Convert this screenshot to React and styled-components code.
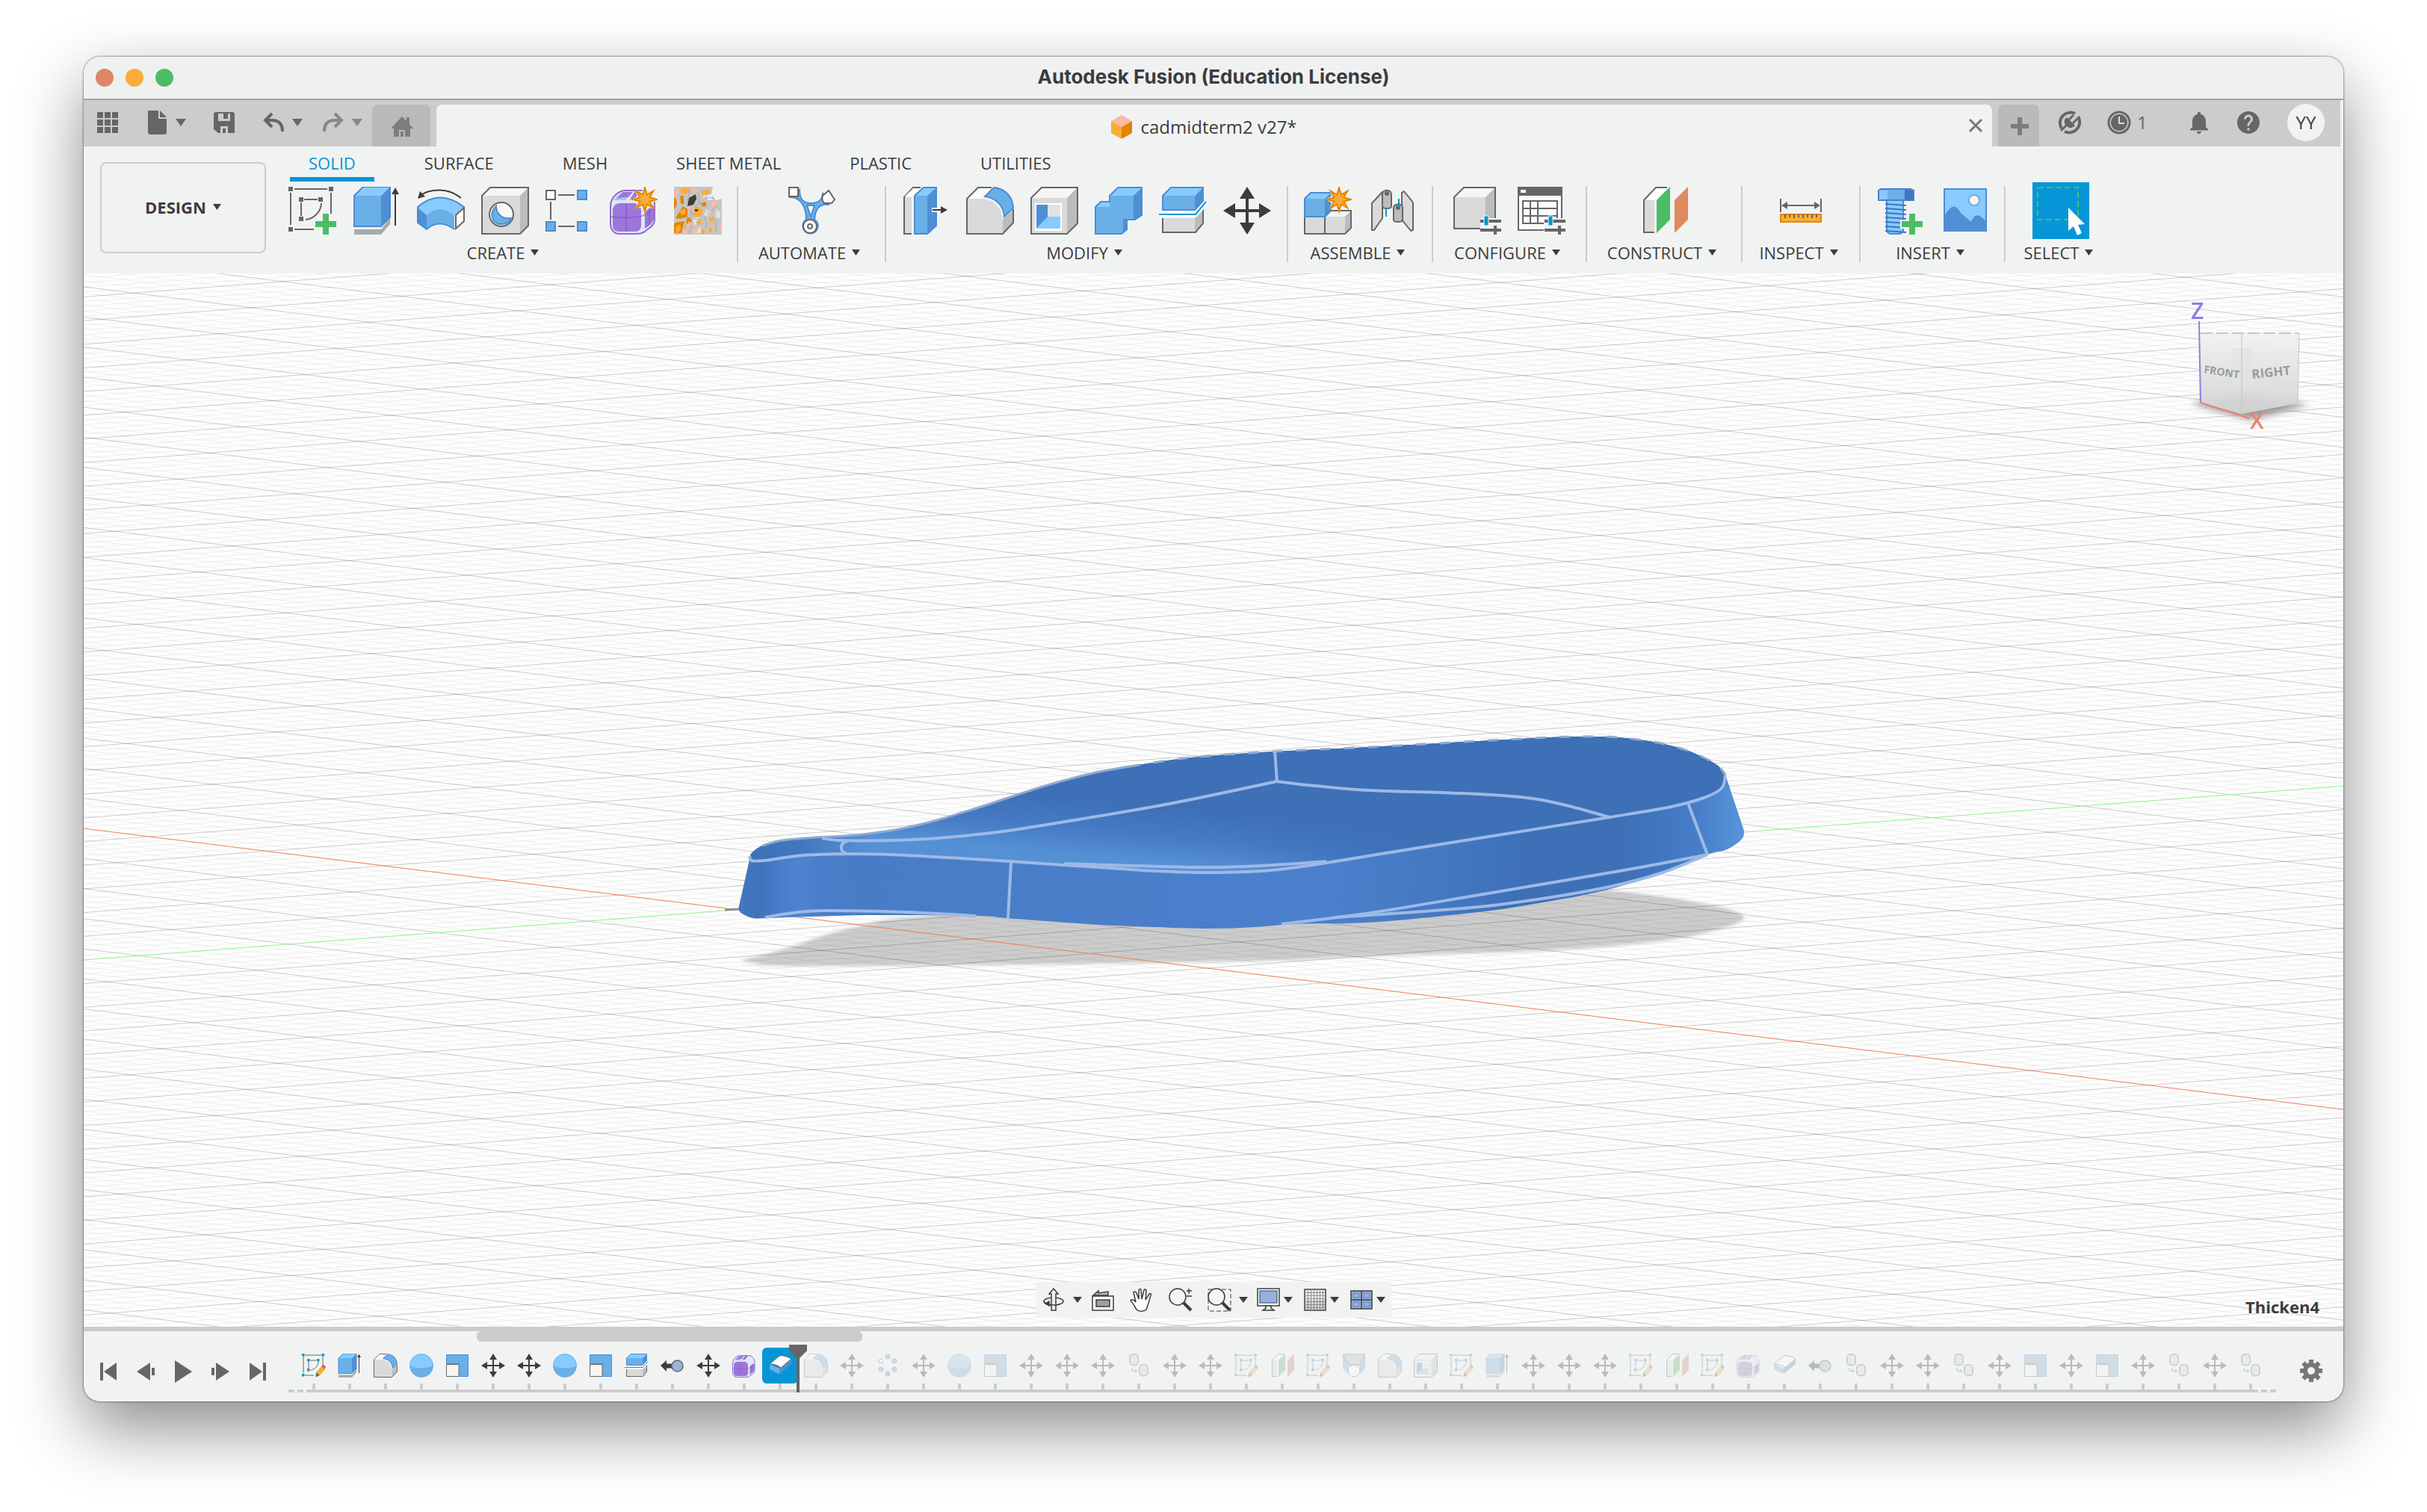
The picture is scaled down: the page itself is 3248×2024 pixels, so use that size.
import styled, { createGlobalStyle, css } from 'styled-components';
import { MdHelp, MdNotifications } from 'react-icons/md';

const GlobalStyle = createGlobalStyle`
  *, *::before, *::after { box-sizing: border-box; }
  body {
    margin: 0;
    background: #fff;
    color: #3c3c3c;
    font-family: 'Open Sans', 'Noto Sans', sans-serif;
    font-size: 22px;
    line-height: 30px;
  }
  button {
    margin: 0;
    padding: 0;
    border: 0;
    background: none;
    color: inherit;
    font: inherit;
  }
  svg { display: block; }
`

const ink = '#3c3c3c';
const line = '#666';
const green = '#4bbd64';
const accent = '#0696d7';

const blue = { front: '#6ab0e6', top: '#87cbff', side: '#4f8fd4', stroke: '#4a8cd6' };
const grey = { front: '#dadada', top: '#f5f5f5', side: '#bcbcbc', stroke: '#666' };

/* ---------- shared drawing helpers ---------- */

// box seen from the front, with a top and a right side
const Box = ({ x, y, w, h, dx = 12, dy = 12, tone = blue }) => (
  <g>
    <path fill={tone.front} d={`M${x} ${y}h${w}v${h}h${-w}z`} />
    <path fill={tone.top} d={`M${x} ${y}l${dx} ${-dy}h${w}l${-dx} ${dy}z`} />
    <path fill={tone.side} d={`M${x + w} ${y}l${dx} ${-dy}v${h}l${-dx} ${dy}z`} />
    <path
      fill="none"
      stroke={tone.stroke}
      strokeWidth="2"
      d={`M${x} ${y}l${dx} ${-dy}h${w}v${h}l${-dx} ${dy}h${-w}z`}
    />
  </g>
);

const Plus = ({ x, y }) => (
  <g>
    <path stroke="#f1f3f3" strokeWidth="12" d={`M${x - 16} ${y}h32M${x} ${y - 16}v32`} />
    <path stroke={green} strokeWidth="8" d={`M${x - 14} ${y}h28M${x} ${y - 14}v28`} />
  </g>
);

const starPoints = (cx, cy, outer, inner) => (
  Array.from({ length: 16 }, (_, i) => {
    const r = i % 2 ? inner : outer;
    const a = (i * Math.PI) / 8;
    return `${cx + r * Math.sin(a)},${cy - r * Math.cos(a)}`;
  }).join(' ')
);

const Star = ({ x, y }) => (
  <g>
    <polygon points={starPoints(x, y, 18, 11)} fill="#f1f3f3" />
    <polygon points={starPoints(x, y, 16, 7)} fill="#f9ad38" stroke="#e28500" strokeWidth="2" />
  </g>
);

const Caret = ({ w = 11, h = 8, color = ink }) => (
  <svg width={w} height={h} viewBox="0 0 12 10" preserveAspectRatio="none" aria-hidden="true">
    <path d="M0 0h12l-6 10z" fill={color} />
  </svg>
);

/* ---------- feature icons, all on a 64 grid ---------- */

const SketchBase = () => (
  <g fill="none" stroke={line} strokeWidth="2">
    <path d="M8 3h44M3 8v43M57 8v28M8 57h26M21 17h18M17 21v18" />
    <path d="M44 22c0 11-10 21-21 22" />
    <path fill={line} stroke="none" d="M0 0h6v6H0zM54 0h6v6h-6zM0 54h6v6H0zM14 14h6v6h-6zM40 14h6v6h-6zM14 40h6v6h-6z" />
  </g>
);

const shapes = {
  sketch: (
    <g>
      <SketchBase />
      <Plus x={50} y={50} />
    </g>
  ),
  sketchEdit: (
    <g>
      <g fill="none" stroke={line} strokeWidth="2">
        <path d="M8 4h44M4 8v44M56 8v26M8 58h24M22 18h16M18 22v18M44 22c0 11-10 21-21 22" />
      </g>
      <path fill={accent} d="M0 0h7v7H0zM53 0h7v7h-7zM0 54h7v7H0zM14 14h7v7h-7zM40 14h7v7h-7zM14 40h7v7h-7z" />
      <path fill="#f9ad38" d="M38 50l14-16 10 8-14 16z" />
      <path fill="#d8663a" d="M52 34l4-4c4-1 9 4 7 8l-3 4z" />
      <path fill="#666" d="M38 50l10 8-11 5z" />
    </g>
  ),
  extrude: (
    <g>
      <path fill="#aaa" d="M2 57h36v7H2zM38 57l12-15v8L38 64z" />
      <Box x={2} y={12} w={36} h={41} />
      <path stroke={ink} strokeWidth="2" d="M57 52V8" />
      <path fill={ink} d="M57 1l5 9H52z" />
    </g>
  ),
  revolve: (
    <g>
      <path fill="none" stroke={ink} strokeWidth="2" d="M4 12C18 2 42 1 59 15" />
      <path fill={ink} d="M1 16L4 6l7 7z" />
      <path fill={blue.top} d="M0 27Q30 2 63 27L50 38Q30 22 13 38z" />
      <path fill={blue.front} d="M13 38Q30 22 50 38V57Q30 42 13 57z" />
      <path fill={blue.side} d="M0 27l13 11v19L0 48z" />
      <path fill="none" stroke={blue.stroke} strokeWidth="2" d="M50 57Q30 42 13 57L1 48V27Q30 2 63 27" />
      <path fill="#fff" stroke={line} strokeWidth="2" d="M52 38l11-10v18L52 56z" />
    </g>
  ),
  hole: (
    <g>
      <Box x={1} y={12} w={51} h={51} dx={11} dy={11} tone={grey} />
      <circle cx="27" cy="37" r="16" fill="#f8f8f8" stroke={line} strokeWidth="2" />
      <path fill={blue.front} stroke={blue.stroke} strokeWidth="2" d="M20 26c-10 9-6 25 8 24 6 0 10-3 12-8-12 2-20-6-20-16z" />
    </g>
  ),
  pattern: (
    <g strokeWidth="2">
      <path stroke={line} d="M17 11h22M7 20v24M17 53h22" />
      <path fill="#fff" stroke={line} d="M1 5h12v12H1z" />
      <path fill={blue.front} stroke={blue.stroke} d="M43 5h12v12H43zM1 47h12v12H1zM43 47h12v12H43z" />
    </g>
  ),
  form: (
    <g>
      <path fill="#dfe6f7" stroke="#9468d0" strokeWidth="2" d="M1 26C1 14 12 5 21 5h22c10 0 17 8 17 19v20c0 8-8 12-12 15-3 3-6 4-12 4H13C5 63 1 57 1 50z" />
      <path fill="#a9c3ef" d="M6 18C11 10 16 7 22 7h8l-9 11zM28 16l6-9h8l-8 9z" />
      <path fill="#9d76db" d="M17 7h14l-6 7c-6 0-12 0-16 3zM34 6h8l-8 10-7 1z" />
      <path fill="#9d76db" d="M14 22h18c6 0 10 4 10 10v20c0 5-3 8-8 8H12c-5 0-8-3-8-8V32c0-6 4-10 10-10zM47 38c0-6 6-10 12-12v18c-2 5-6 8-12 12z" />
      <path fill="none" stroke="#7b55b8" strokeWidth="1" d="M22 22v38M2 40c14 2 28 2 42-1l15-9M53 31v20" />
    </g>
  ),
  formNew: null,
  voronoi: (
    <g>
      <path fill="#c6c5c3" d="M0 0h64v64H0z" />
      <path fill="#f1f1f1" d="M52 0h12v16l-8 2-6-8zM44 12l6-2 2 8-6 0z" />
      <path fill="#e4e2e0" d="M24 42l8-2 2 8-6 4zM40 8l4 4-6 4zM30 56l6-2v8l-6 0zM44 30l6 4-4 6-6-2zM56 30l6 4v8l-6 0z" />
      <path fill="#e28500" d="M0 14c5 2 5 12 0 16zM8 12h5v12l-4-2zM36 22l6-2 2 5-6 2zM2 42l10-16 6 4v10l-10 3zM18 40l6 4-2 8-6-4zM2 48l12-2-4 16H0V50z" />
      <path fill="#f9ad38" d="M8 4l7-4 5 4-2 6-8-1zM36 6l12-3v6l-10 3zM26 30l4-4 8 4v8l-8 3-5-4zM8 32l6-3 2 7-6 2zM30 46l6-3v6l-5 4zM47 42l6-2 1 6-6 2zM2 54l6-4 1 8-6 5zM36 58l5-2v7h-5zM46 56l5-2v6l-5 2zM14 52l4-2-4 10z" />
      <path fill="#fbb9a6" d="M0 8l4-6 3 4-4 8zM24 0l6 4-2 5-4-3zM50 20l6-2 2 6-6 4zM18 26l4 0-1 8-3-2zM44 34l4-2 1 5-4 2zM61 48l3 0v10h-3zM28 54l5 2-3 7-5-1zM50 51l5 0 0 5-4 1zM20 46l3 2-2 6-4-2zM12 58l6-2-2 7h-5z" />
      <path fill={ink} d="M20 15l9-5 1 6-4 8-8 2zM28 30h4v3h-4z" />
      <path fill="none" stroke="#a5a5a5" strokeWidth="1" d="M21 2l-3 20M32 8l2 14 10 6M46 14l8 2M22 30l2 12 8 2M40 40l4 8-2 8M24 52l-4 10M58 24l-8 8M56 44l0 16M34 22l-6 4" />
    </g>
  ),
  automate: (
    <g>
      <path fill={blue.front} stroke={blue.stroke} strokeWidth="2" d="M16 4c0 14 6 18 15 18s16-4 16-14l8 16c-14-2-18 8-19 20 5 3 6 9 3 14-4 6-13 6-17 0-3-5-2-11 3-14 0-16-7-30-21-30z" />
      <path fill="#fff" stroke={blue.stroke} strokeWidth="2" d="M26 25h10l-5 15z" />
      <path fill="#fff" stroke={line} strokeWidth="2" d="M2 1h12v12H2zM47 12l8-7 8 12-4 5H49c-3-3-3-7-2-10z" />
      <circle cx="30" cy="53" r="9" fill="#fff" stroke={line} strokeWidth="2" />
      <circle cx="30" cy="53" r="3" fill="none" stroke={line} strokeWidth="2" />
    </g>
  ),
  pressPull: (
    <g>
      <path fill={grey.front} d="M2 14h11v49H2z" />
      <path fill="none" stroke={line} strokeWidth="2" d="M13 63H3V14L15 1h10" />
      <path fill="#fff" d="M4 13L15 2h9L13 13z" />
      <Box x={17} y={12} w={17} h={51} dx={12} dy={11} />
      <path stroke="#f1f3f3" strokeWidth="6" d="M40 31h14" />
      <path stroke={ink} strokeWidth="2" d="M41 31h12" />
      <path fill={ink} d="M61 31l-9-5v10z" />
    </g>
  ),
  fillet: (
    <g>
      <path fill={grey.front} d="M1 16h20c18 2 28 14 28 30v17H1z" />
      <path fill="#fafafa" d="M1 16L16 1h18L22 16z" />
      <path fill={grey.side} d="M49 44l14-14v18L49 63z" />
      <path fill="none" stroke={line} strokeWidth="2" d="M34 1H16L1 16v47h48l14-15V30" />
      <path fill={blue.front} stroke={blue.stroke} strokeWidth="2" d="M25 13L37 1c16 2 25 12 26 27L51 40C50 25 40 15 25 13z" />
    </g>
  ),
  shell: (
    <g>
      <Box x={1} y={15} w={48} h={48} dx={14} dy={14} tone={grey} />
      <path fill="#fff" d="M6 22h36v37H6z" />
      <path fill="#4f8fd4" d="M8 24h15v17L8 56z" />
      <path fill={blue.top} d="M23 40h17v16H8z" />
      <path fill="#e2e2e2" d="M23 24h17v16H23z" />
    </g>
  ),
  combine: (
    <g>
      <path fill={blue.side} d="M51 12L63 1v37l-9 6H42v14l-7 5V42z" />
      <path fill={blue.front} d="M20 12h32v31H38v20H1V27h19z" />
      <path fill={blue.top} d="M20 12L31 1h32L52 12zM1 27l7-7h12v7z" />
      <path fill="none" stroke={blue.stroke} strokeWidth="2" d="M20 20V12L31 1h32v37l-9 6H43v13l-7 6H1V27l7-7z" />
    </g>
  ),
  split: (
    <g>
      <path fill={grey.front} d="M5 42h43v19H5z" />
      <path fill={grey.side} d="M48 42l11-14v20L48 61z" />
      <path fill="none" stroke={line} strokeWidth="2" d="M5 42v19h44l10-12V28" />
      <Box x={5} y={12} w={43} h={19} dx={11} dy={11} />
      <path fill="none" stroke="#fff" strokeWidth="7" d="M0 37h49l15-17" />
      <path fill="none" stroke={accent} strokeWidth="2" d="M0 37h49l14-17" />
    </g>
  ),
  move: (
    <g>
      <path stroke={ink} strokeWidth="4" d="M32 10v44M10 32h44" />
      <path fill={ink} d="M32 0l10 16H22zM32 64l10-16H22zM0 32l16-10v20zM64 32L48 22v20z" />
    </g>
  ),
  newComponent: (
    <g>
      <Box x={1} y={40} w={27} h={23} dx={8} dy={8} tone={grey} />
      <Box x={28} y={40} w={27} h={23} dx={8} dy={8} tone={grey} />
      <Box x={1} y={16} w={27} h={24} dx={8} dy={8} />
      <Star x={47} y={17} />
    </g>
  ),
  jointPlates: (
    <g stroke={line} strokeWidth="2" strokeLinejoin="round">
      <path fill={grey.front} d="M5 22l14-15v35L8 58H5z" />
      <path fill={grey.side} d="M19 10c0-7 12-7 12 0v16c0 4-12 4-12 0z" />
      <path fill={grey.front} d="M45 8l3-2 12 15v37l-3 1-12-15z" />
      <path fill={grey.side} d="M34 28c0-6 12-6 12 0v16c0 4-12 4-12 0z" />
      <circle cx="25" cy="9" r="2" fill={line} />
      <circle cx="40" cy="28" r="2" fill={line} />
      <path stroke={accent} d="M24 29v11M41 16v11" />
    </g>
  ),
  configure: (
    <g>
      <Box x={1} y={14} w={42} h={42} dx={13} dy={13} tone={grey} />
      <path fill="#f1f3f3" d="M36 42h28v22H36z" />
      <path fill={line} d="M36 44h28v4H36zM36 56h28v4H36zM54 52h4v12h-4z" />
      <path fill={accent} stroke="#f1f3f3" strokeWidth="1" d="M41 39h6v13h-6z" />
    </g>
  ),
  configTable: (
    <g>
      <path fill="#fafafa" stroke={line} strokeWidth="2" d="M1 1h58v57H1z" />
      <path fill={line} d="M0 0h60v12H0z" />
      <path fill="#fff" d="M4 4h7v4H4z" />
      <path fill="none" stroke={line} strokeWidth="2" d="M7 19h46v30H7zM7 29h46M7 39h46M17 19v30M27 19v30" />
      <path fill="#f1f3f3" d="M35 42h30v22H35z" />
      <path fill={line} d="M36 44h28v4H36zM36 56h28v4H36zM54 52h4v12h-4z" />
      <path fill={accent} stroke="#f1f3f3" strokeWidth="1" d="M41 39h6v13h-6z" />
    </g>
  ),
  construct: (
    <g>
      <path fill={grey.front} d="M5 18h14v43H5z" />
      <path fill="#fff" d="M5 18L21 1h15L20 18z" />
      <path fill="none" stroke={line} strokeWidth="2" d="M19 61H5V18L21 1h15" />
      <path fill={green} d="M22 18L40 0v44L22 62z" />
      <path fill="#e08a60" d="M46 18L64 0v44L46 62z" />
    </g>
  ),
  measure: (
    <g>
      <path stroke={line} strokeWidth="2" d="M5 16v18M59 16v18M8 25h48" />
      <path fill={line} d="M6 25l8-5v10zM58 25l-8-5v10z" />
      <path fill="#f9ad38" stroke="#e28500" strokeWidth="2" d="M5 37h54v10H5z" />
      <path stroke={line} strokeWidth="2" d="M11 37v5M17 37v4M23 37v5M29 37v4M35 37v5M41 37v4M47 37v5M53 37v4" />
    </g>
  ),
  fastener: (
    <g>
      <path fill={blue.top} stroke={blue.stroke} strokeWidth="2" d="M14 18h22v42l-4 3H18l-4-3z" />
      <path stroke="#3d73c0" strokeWidth="2" d="M12 23l28 2M12 29l28 2M12 35l28 2M12 41l28 2M12 47l28 2M12 53l28 2M12 59l28 2" />
      <path fill={blue.front} stroke="#4a80c8" strokeWidth="2" d="M3 5l3-2h40l4 2v13H3z" />
      <path fill={blue.top} d="M4 5h11v12H4z" />
      <path fill="#3f76c0" d="M38 4h8l3 2v11H38z" />
      <Plus x={48} y={50} />
    </g>
  ),
  canvas: (
    <g>
      <path fill={blue.top} stroke={blue.stroke} strokeWidth="2" d="M5 3h56v56H5z" />
      <circle cx="45" cy="18" r="7" fill="#fff3ec" stroke={blue.front} strokeWidth="2" />
      <path fill={blue.side} d="M5 39c10-16 15-16 22-4l14 12c4-11 10-12 19-1v13H5z" />
    </g>
  ),
  sphere: (
    <g>
      <circle cx="32" cy="32" r="31" fill={blue.top} stroke={blue.front} strokeWidth="2" />
      <path fill={blue.front} d="M1 32c14 9 48 9 62 0a31 31 0 0 1-62 0z" />
    </g>
  ),
  scale: (
    <g>
      <path fill={blue.front} stroke={blue.stroke} strokeWidth="2" d="M3 3h58v58H38V27H3z" />
      <path fill="#f5f5f5" stroke={line} strokeWidth="2" d="M3 29h33v32H3z" />
    </g>
  ),
  align: (
    <g>
      <path fill={ink} d="M0 32l16-14v9h14v12H16v9z" />
      <circle cx="45" cy="33" r="15" fill="#9ab3dd" stroke={line} strokeWidth="3" />
    </g>
  ),
  thicken: (
    <g>
      <path fill={blue.side} d="M30 36L62 14v14L30 54z" />
      <path fill={blue.front} d="M4 28l26 12v15L4 42z" />
      <path fill="#fff" stroke="#666" strokeWidth="2" d="M4 28L30 6c10-2 22 2 32 8L34 38c-8-8-20-10-30-10z" />
    </g>
  ),
  circular: (
    <g fill={blue.front} stroke={line} strokeWidth="2">
      <circle cx="32" cy="8" r="6" />
      <circle cx="50" cy="20" r="6" />
      <circle cx="50" cy="42" r="6" />
      <circle cx="32" cy="54" r="6" />
      <circle cx="14" cy="42" r="6" />
      <circle cx="14" cy="20" r="6" fill="#fff" />
    </g>
  ),
  joint: (
    <g fill={grey.front} stroke={line} strokeWidth="3">
      <rect x="8" y="2" width="22" height="29" rx="8" />
      <rect x="34" y="30" width="22" height="29" rx="8" />
      <path fill="none" stroke={blue.stroke} d="M14 38v8h12l-4-4m4 4l-4 4" />
    </g>
  ),
  loft: (
    <g>
      <path fill={blue.front} d="M2 2h60v38L48 54V32H16v22L2 40z" />
      <path fill="#b8c0cc" stroke={line} strokeWidth="2" d="M2 2h60L46 30H18z" />
      <circle cx="32" cy="46" r="16" fill="#fff" stroke={line} strokeWidth="2" />
    </g>
  ),
};

shapes.formNew = (
  <g>
    {shapes.form}
    <Star x={47} y={17} />
  </g>
);

const FeatureIcon = ({ name, size = 64 }) => (
  <svg width={size} height={size} viewBox="0 0 64 64" aria-hidden="true">{shapes[name]}</svg>
);

/* ---------- window ---------- */

const Page = styled.div`
  min-height: 100vh;
  padding: 76px 112px 148px;
  display: flex;
`

const AppWindow = styled.div`
  flex: 1;
  min-width: 0;
  display: flex;
  flex-direction: column;
  background: #f1f3f3;
  border-radius: 22px;
  overflow: hidden;
  box-shadow: 0 0 2px 1px rgba(0, 0, 0, .35), 0 36px 90px rgba(0, 0, 0, .46);
`

const TitleBar = styled.header`
  height: 58px;
  flex: none;
  display: grid;
  grid-template-columns: 1fr auto 1fr;
  align-items: center;
  padding: 0 16px;
  background: #eff1f1;
  border-bottom: 2px solid #a3a3a3;

  h1 {
    margin: 0 0 2px;
    font: 700 26px/32px Inter, sans-serif;
  }
`

const Lights = styled.div`
  display: flex;
  gap: 16px;
`

const Light = styled.button`
  width: 24px;
  height: 24px;
  border-radius: 50%;
  background: ${p => p.$color};
`

/* ---------- tab strip ---------- */

const Strip = styled.div`
  height: 62px;
  flex: none;
  margin-right: 4px;
  display: flex;
  align-items: center;
  background: #ccc;
  font-size: 24px;
`

const QuickTools = styled.div`
  display: flex;
  gap: 35px;
  padding: 0 13px 2px 16px;
`

const History = styled.div`
  display: flex;
  gap: 26px;
`

const ToolButton = styled.button`
  display: flex;
  align-items: center;
  gap: 8px;
  height: 32px;
  color: #666;
  opacity: ${p => (p.disabled ? .5 : 1)};
`

const SideTab = styled.button`
  align-self: flex-end;
  flex: none;
  width: ${p => p.$width};
  height: 56px;
  padding: 2px 0 0 2px;
  border-radius: 8px 8px 0 0;
  background: #bababa;
  display: grid;
  place-items: center;
`

const DocTab = styled.div`
  align-self: flex-end;
  flex: 1;
  height: 56px;
  margin: 0 8px;
  padding: 0 12px 0 0;
  border-radius: 8px 8px 0 0;
  background: #f1f3f3;
  display: flex;
  align-items: center;
`

const DocName = styled.div`
  flex: 1;
  display: flex;
  align-items: center;
  justify-content: center;
  gap: 10px;
  padding: 4px 0 0 4px;
`

const Account = styled.div`
  width: 403px;
  padding: 0 21px 2px 25px;
  display: flex;
  justify-content: space-between;
  align-items: center;
`

const Status = styled.div`
  display: flex;
  align-items: center;
  gap: ${p => p.$gap}px;
`

const Avatar = styled.button`
  width: 50px;
  height: 50px;
  margin-left: 4px;
  border-radius: 50%;
  background: #f1f3f3;
  color: #3c3c3c;
`

/* ---------- ribbon ---------- */

const Ribbon = styled.div`
  flex: none;
  height: 170px;
  display: flex;
  padding-left: 22px;
`

const Workspace = styled.button`
  flex: none;
  width: 222px;
  height: 122px;
  margin: 21px 9px 0 0;
  padding-bottom: 2px;
  border: 2px solid #ccc;
  border-radius: 8px;
  display: flex;
  align-items: center;
  justify-content: center;
  gap: 9px;
  font-weight: 700;
`

const Tabs = styled.nav`
  display: flex;
  gap: 42px;
  padding-left: 23px;
`

const Tab = styled.button`
  height: 47px;
  padding: 2px 25px 0;
  border-bottom: 6px solid transparent;
  white-space: nowrap;
  ${p => p.$active && css`
    color: ${accent};
    border-color: ${accent};
  `}
`

const Groups = styled.div`
  display: flex;
  margin-top: 1px;
`

const Group = styled.section`
  flex: 0 0 ${p => p.$width}px;
  position: relative;
  display: flex;
  flex-direction: column;
  align-items: center;

  &:not(:first-child)::before {
    content: '';
    position: absolute;
    left: -1px;
    top: 5px;
    width: 2px;
    height: 102px;
    background: #ccc;
  }
`

const Commands = styled.div`
  height: 76px;
  display: flex;
  align-items: center;
  gap: 22px;
`

const GroupLabel = styled.button`
  height: 36px;
  padding-right: 6px;
  display: flex;
  align-items: center;
  gap: 8px;
  white-space: nowrap;
`

const SelectTool = styled.button`
  width: 76px;
  height: 76px;
  background: ${accent};
`

const groups = [
  { label: 'CREATE', width: 622, tools: ['sketch', 'extrude', 'revolve', 'hole', 'pattern', 'formNew', 'voronoi'] },
  { label: 'AUTOMATE', width: 198, tools: ['automate'] },
  { label: 'MODIFY', width: 538, tools: ['pressPull', 'fillet', 'shell', 'combine', 'split', 'move'] },
  { label: 'ASSEMBLE', width: 194, tools: ['newComponent', 'jointPlates'] },
  { label: 'CONFIGURE', width: 206, tools: ['configure', 'configTable'] },
  { label: 'CONSTRUCT', width: 208, tools: ['construct'] },
  { label: 'INSPECT', width: 158, tools: ['measure'] },
  { label: 'INSERT', width: 194, tools: ['fastener', 'canvas'] },
  { label: 'SELECT', width: 150, tools: [] },
];

/* ---------- viewport ---------- */

const Viewport = styled.main`
  flex: 1;
  position: relative;
  min-height: 600px;
  background: #fefefe;
  overflow: hidden;
`

const Scene = styled.svg`
  position: absolute;
  inset: 0;
  width: 100%;
  height: 100%;
`

const ViewCube = styled.svg`
  position: absolute;
  top: 24px;
  right: 36px;
  font-family: 'Open Sans', sans-serif;
`

const NavBar = styled.div`
  position: absolute;
  left: 50%;
  bottom: 12px;
  transform: translateX(-50%);
  height: 48px;
  padding-left: 8px;
  display: flex;
  align-items: center;
  background: #f1f3f3;
`

const NavButton = styled.button`
  width: ${p => p.$width}px;
  display: flex;
  align-items: center;
  gap: ${p => p.$gap || 4}px;
`

const Hint = styled.div`
  position: absolute;
  right: 32px;
  bottom: 12px;
  font-weight: 700;
`

// ground plane: origin and one major cell along each axis
const origin = [986, 1217.7];
const axisX = [157.4, 19.58];
const axisY = [200, -15.4];
const divisions = 5;

const gridLines = (dir, step) => {
  const major = [];
  const minor = [];
  for (let i = -40 * divisions; i <= 40 * divisions; i++) {
    const x = origin[0] + (step[0] * i) / divisions;
    const y = origin[1] + (step[1] * i) / divisions;
    const d = `M${x - dir[0] * 60} ${y - dir[1] * 60}L${x + dir[0] * 60} ${y + dir[1] * 60}`;
    if (i % divisions) minor.push(d);
    else if (i) major.push(d);
  }
  return { major: major.join(''), minor: minor.join('') };
};

const gridX = gridLines(axisX, axisY);
const gridY = gridLines(axisY, axisX);

const axisPath = dir => (
  `M${origin[0] - dir[0] * 20} ${origin[1] - dir[1] * 20}L${origin[0] + dir[0] * 20} ${origin[1] + dir[1] * 20}`
);

// smooth curve through a list of points
const curve = (pts, start = 'M') => {
  let d = `${start}${pts[0][0]} ${pts[0][1]}`;
  for (let i = 0; i < pts.length - 1; i++) {
    const a = pts[i - 1] || pts[i];
    const b = pts[i];
    const c = pts[i + 1];
    const e = pts[i + 2] || c;
    d += `C${b[0] + (c[0] - a[0]) / 6} ${b[1] + (c[1] - a[1]) / 6} ${c[0] - (e[0] - b[0]) / 6} ${c[1] - (e[1] - b[1]) / 6} ${c[0]} ${c[1]}`;
  }
  return d;
};

const backEdge = [
  [1003, 1151], [1006, 1142], [1020, 1132], [1046, 1125], [1090, 1121], [1143, 1118], [1197, 1111], [1250, 1099],
  [1303, 1083], [1352, 1067], [1405, 1050], [1463, 1035], [1512, 1026], [1570, 1017], [1618, 1012], [1706, 1006],
  [1834, 1000], [1979, 992], [2076, 987], [2124, 986], [2163, 987], [2212, 993], [2250, 1002], [2280, 1014],
  [2299, 1025], [2309, 1037],
];
const lowerEdge = [
  [2334, 1112], [2333, 1120], [2326, 1128], [2309, 1138], [2285, 1144], [2226, 1168], [2173, 1185], [2124, 1197],
  [2076, 1206], [2003, 1218], [1931, 1226], [1858, 1233], [1800, 1236], [1732, 1237], [1679, 1241], [1618, 1243],
  [1546, 1241], [1473, 1238], [1400, 1233], [1347, 1229], [1306, 1226], [1172, 1225], [1085, 1227], [1025, 1229],
  [1008, 1229], [993, 1223], [988, 1217],
];
const rim = [
  [1003, 1146], [1006, 1152], [1022, 1152], [1075, 1145], [1134, 1143], [1192, 1144], [1269, 1148], [1352, 1153],
  [1424, 1158], [1487, 1162], [1546, 1166], [1618, 1168], [1700, 1165], [1775, 1155], [1848, 1143], [1979, 1122],
  [2154, 1094], [2236, 1080], [2280, 1068], [2304, 1055], [2309, 1037],
];
const innerRim = [[1424, 1156], [1521, 1159], [1618, 1161], [1703, 1158], [1775, 1153]];
const crease = [
  [1100, 1122], [1124, 1125], [1192, 1125], [1255, 1122], [1342, 1113], [1449, 1096], [1570, 1075], [1709, 1046],
];
const creaseRight = [
  [1709, 1046], [1761, 1052], [1834, 1058], [1931, 1061], [1998, 1064], [2052, 1069], [2100, 1079], [2154, 1094],
];
const footLeft = [[1024, 1228], [1061, 1222], [1100, 1219], [1182, 1220], [1255, 1223], [1306, 1226]];
const footUpper = [[1715, 1237], [1834, 1222], [1979, 1198], [2173, 1165], [2285, 1144]];
const footLower = [[1785, 1228], [1848, 1224], [1979, 1214], [2076, 1201], [2154, 1187], [2222, 1169], [2285, 1144]];
const shadow = [
  [991, 1286], [1051, 1270], [1110, 1250], [1158, 1238], [1212, 1228], [1400, 1215], [2000, 1180], [2154, 1192],
  [2222, 1200], [2270, 1208], [2316, 1218], [2333, 1231], [2285, 1248], [2212, 1261], [2076, 1272], [1931, 1277],
  [1785, 1282], [1700, 1286], [1376, 1291], [1061, 1293], [1008, 1289], [991, 1286],
];

const bodyPath = `${curve(backEdge)}${curve(lowerEdge, 'L')}Z`;
const topPath = `${curve(backEdge)}${curve([...rim].reverse(), 'L')}Z`;

const Model = () => (
  <Scene viewBox="112 366 3024 1410" preserveAspectRatio="xMidYMid slice" role="img" aria-label="Paddle body on the ground plane">
    <defs>
      <linearGradient id="side" gradientUnits="userSpaceOnUse" x1="988" y1="0" x2="2334" y2="0">
        <stop offset="0" stopColor="#4478c2" />
        <stop offset=".02" stopColor="#3f72bb" />
        <stop offset=".045" stopColor="#4a7ecb" />
        <stop offset=".06" stopColor="#4f84cf" />
        <stop offset=".08" stopColor="#4a7eca" />
        <stop offset=".12" stopColor="#487cc6" />
        <stop offset=".35" stopColor="#4a7ec9" />
        <stop offset=".58" stopColor="#4c80cc" />
        <stop offset=".7" stopColor="#4478c2" />
        <stop offset=".78" stopColor="#3d70b7" />
        <stop offset=".88" stopColor="#3d70b7" />
        <stop offset=".95" stopColor="#477cc7" />
        <stop offset="1" stopColor="#5795d8" />
      </linearGradient>
      <linearGradient id="top" gradientUnits="userSpaceOnUse" x1="1408" y1="1068" x2="1400" y2="1154">
        <stop offset="0" stopColor="#3d70b7" />
        <stop offset=".45" stopColor="#477bc5" />
        <stop offset=".85" stopColor="#5590d5" />
      </linearGradient>
      <linearGradient id="topShade" gradientUnits="userSpaceOnUse" x1="1003" y1="0" x2="2310" y2="0">
        <stop offset="0" stopColor="#3d70b7" />
        <stop offset=".05" stopColor="#3d70b7" stopOpacity=".8" />
        <stop offset=".12" stopColor="#3d70b7" stopOpacity="0" />
        <stop offset=".5" stopColor="#3d70b7" stopOpacity="0" />
        <stop offset=".7" stopColor="#3d70b7" />
        <stop offset="1" stopColor="#3d70b7" />
      </linearGradient>
      <filter id="soft" x="-5%" y="-20%" width="110%" height="140%">
        <feGaussianBlur stdDeviation="2" />
      </filter>
    </defs>

    <path d={curve(shadow)} fill="#ccc" filter="url(#soft)" />
    <g fill="none" stroke="#000">
      <path d={gridX.minor + gridY.minor} strokeOpacity=".06" />
      <path d={gridX.major + gridY.major} strokeOpacity=".2" />
    </g>
    <path d={axisPath(axisX)} stroke="#ee7a5a" strokeWidth="1" />
    <path d={axisPath(axisY)} stroke="#8df08d" strokeWidth="1" />
    <path d="M970 1218l18-1" stroke="#8a8f8a" strokeWidth="3" />

    <path d={bodyPath} fill="url(#side)" />
    <path d={topPath} fill="url(#top)" />
    <path d={topPath} fill="url(#topShade)" />
    <g fill="none" stroke="#9db9e6" strokeWidth="4">
      <path d={curve(backEdge.slice(2, 13))} strokeWidth="3" stroke="#8fa9d0" />
      <path d={curve(backEdge.slice(12))} strokeWidth="3" stroke="#8fa9d0" strokeDasharray="14 18" />
      <path d={curve(rim)} />
      <path d={curve(innerRim)} />
      <path d={curve(crease)} />
      <path d={curve(creaseRight)} />
      <path d={curve(footLeft)} />
      <path d={curve(footUpper)} />
      <path d={curve(footLower)} />
      <path d="M1706 1005l3 41M1134 1126c-11 3-11 14 0 17M1353 1154l-4 75M2259 1075l26 69" />
    </g>
  </Scene>
);

const Cube = () => (
  <ViewCube width="180" height="200" viewBox="2920 390 180 200" role="img" aria-label="View cube">
    <defs>
      <linearGradient id="face" x1="0" y1="0" x2="0" y2="1">
        <stop offset="0" stopColor="#f0f1f1" />
        <stop offset="1" stopColor="#d2d3d3" />
      </linearGradient>
      <filter id="cubeShadow" x="-20%" y="-60%" width="140%" height="220%">
        <feGaussianBlur stdDeviation="5" />
      </filter>
    </defs>
    <path d="M2932 540l68-14 90 16-78 20z" fill="#999" filter="url(#cubeShadow)" />
    <path d="M2945 446l55-1v109l-55-15z" fill="url(#face)" fillOpacity=".94" />
    <path d="M3000 445l77 1-2 94-75 14z" fill="url(#face)" fillOpacity=".94" />
    <path d="M2988 466h27v52l-15 4-12-2z" fill="#dfe2e5" fillOpacity=".6" />
    <path d="M3000 445v109M3077 446l-2 94" stroke="#c4c4c4" fill="none" />
    <path d="M2945 446h132" stroke="#c8c8c8" strokeWidth="2" strokeDasharray="16 5" />
    <path d="M2943 430l2 109" stroke="#8f7fdc" strokeWidth="2" />
    <path d="M2945 539l65 21" stroke="#ea8468" strokeWidth="2" />
    <g fill="#9b9b9b" fontWeight="700">
      <text x="2949" y="499" fontSize="14" transform="rotate(9 2949 499)">FRONT</text>
      <text x="3014" y="507" fontSize="17" transform="rotate(-6 3014 507)">RIGHT</text>
    </g>
    <g fontSize="30" fontWeight="600">
      <text x="2932" y="427" fill="#8f7fdc">Z</text>
      <text x="3011" y="574" fill="#ea8468">X</text>
    </g>
  </ViewCube>
);

const navShapes = {
  orbit: (
    <g>
      <ellipse cx="16" cy="18" rx="13" ry="5" />
      <path fill="#eee" d="M13 30V8h-3l6-7 6 7h-3v22z" />
      <path d="M3 17c0 4 6 6 16 6" />
      <path fill={ink} d="M5 21l5-3v6z" />
    </g>
  ),
  lookAt: (
    <g>
      <path fill="#fff" d="M2 11h28v19H2z" />
      <path fill="#9a9fa8" d="M7 16h18v9H7z" />
      <path fill="#bbb" d="M3 10l7-6v3l13-2v5z" />
    </g>
  ),
  pan: (
    <path fill="#fff" d="M9 29C6 24 4 20 1 17c1-2 4-2 7 2L5 6c1-2 3-1 4 1l3 8 0-12c1-2 3-2 3 0l1 12 3-12c1-2 3-1 3 1l-1 12 5-8c2-1 3 0 2 2-2 6-3 12-6 19-3 3-10 3-13 0z" />
  ),
  zoom: (
    <g>
      <path strokeWidth="4" d="M20 20l10 10" />
      <circle cx="12" cy="12" r="11" fill="#f6f6f6" />
      <path d="M24 4h7M27 1v7M24 11h7" />
    </g>
  ),
  fit: (
    <g>
      <path strokeDasharray="6 3" strokeWidth="1" d="M1 2h30v29H1z" />
      <path strokeWidth="4" d="M20 20l10 10" />
      <circle cx="12" cy="12" r="11" fill="#f6f6f6" />
    </g>
  ),
  display: (
    <g>
      <path fill="#fff" d="M1 1h29v23H1z" />
      <path fill="#97b0dc" stroke="#5b6f96" d="M4 4h23v16H4z" />
      <path fill="#eee" d="M12 24h7v3l4 3H8l4-3z" />
    </g>
  ),
  grid: (
    <g>
      <path fill="#fff" d="M2 2h28v28H2z" />
      <path stroke="none" fill="#888" fillOpacity=".35" d="M3 16h26v13H3z" />
      <path stroke="#888" strokeWidth="1" d="M6.5 2v28M10.5 2v28M14.5 2v28M18.5 2v28M22.5 2v28M26.5 2v28M2 6.5h28M2 10.5h28M2 14.5h28M2 18.5h28M2 22.5h28M2 26.5h28" />
    </g>
  ),
  viewports: (
    <g>
      <path fill="#97b0dc" d="M2 4h28v24H2zM16 4v24M2 16h28" />
      <path stroke="#5f80bd" strokeWidth="1" d="M5 7h8v6H5zM19 7h8v6h-8zM5 19h8v6H5zM19 19h8v6h-8z" />
    </g>
  ),
};

const navItems = [
  { name: 'orbit', label: 'Orbit', width: 66, gap: 10, menu: true },
  { name: 'lookAt', label: 'Look at', width: 52 },
  { name: 'pan', label: 'Pan', width: 52 },
  { name: 'zoom', label: 'Zoom', width: 52 },
  { name: 'fit', label: 'Fit', width: 66, gap: 10, menu: true },
  { name: 'display', label: 'Display settings', width: 62, menu: true },
  { name: 'grid', label: 'Grid and snaps', width: 62, menu: true },
  { name: 'viewports', label: 'Viewports', width: 56, menu: true },
];

/* ---------- timeline ---------- */

const Footer = styled.footer`
  flex: none;
  display: flex;
  border-top: 6px solid #cbcbcb;
`

const Playback = styled.div`
  flex: none;
  width: 270px;
  padding: 14px 0 0 17px;
  display: flex;
  align-items: center;
  gap: 18px;
`

const Timeline = styled.div`
  flex: 1;
  min-width: 0;
  padding: 0 4px 12px;
`

const ScrollArea = styled.div`
  display: grid;
  grid-template-columns: 252fr 516fr 1892fr;
  margin-bottom: 8px;

  &::before {
    content: '';
    grid-column: 2;
    height: 14px;
    border-radius: 6px;
    background: #ccc;
  }
`

const Features = styled.ol`
  margin: 0;
  padding: 0 0 0 10px;
  list-style: none;
  display: flex;
`

const Feature = styled.li`
  flex: 0 0 48px;
  position: relative;
  display: flex;
  flex-direction: column;
  align-items: center;

  button {
    width: 48px;
    height: 48px;
    border-radius: 6px;
    display: grid;
    place-items: center;
    background: ${p => (p.$selected ? accent : 'none')};
  }
  ${p => p.$faded && css`
    button svg {
      opacity: .3;
      filter: saturate(.6);
    }
  `}

  &::after {
    content: '';
    width: 4px;
    height: 8px;
    background: #ccc;
  }
`

const Marker = styled.svg`
  position: absolute;
  z-index: 1;
  top: -4px;
  right: -12px;
`

const Track = styled.div`
  height: 4px;
  display: flex;
  gap: 4px;

  span { width: 8px; background: #ccc; }
  span:nth-child(3) { flex: 1; }
`

const Settings = styled.button`
  flex: none;
  width: 86px;
  padding-top: 12px;
  display: grid;
  place-items: center;
`

const features = [
  'sketchEdit', 'extrude', 'fillet', 'sphere', 'scale', 'move', 'move', 'sphere', 'scale', 'split', 'align',
  'move', 'form', 'thicken', 'fillet', 'move', 'circular', 'move', 'sphere', 'scale', 'move', 'move', 'move',
  'joint', 'move', 'move', 'sketchEdit', 'construct', 'sketchEdit', 'loft', 'fillet', 'shell', 'sketchEdit',
  'extrude', 'move', 'move', 'move', 'sketchEdit', 'construct', 'sketchEdit', 'form', 'thicken', 'align', 'joint',
  'move', 'move', 'joint', 'move', 'scale', 'move', 'scale', 'move', 'joint', 'move', 'joint',
];
const current = 13;

const playback = [
  { label: 'Go to start', d: 'M5 4h4v24H5zM27 4v24L10 16z' },
  { label: 'Step back', d: 'M22 4v24L4 16zM24 11h4v10h-4z' },
  { label: 'Play', d: 'M5 1l23 15L5 31z' },
  { label: 'Step forward', d: 'M10 4v24l18-12zM4 11h4v10H4z' },
  { label: 'Go to end', d: 'M23 4h4v24h-4zM5 4v24l17-12z' },
];

const Gear = () => (
  <svg width="32" height="32" viewBox="0 0 32 32" aria-hidden="true">
    <circle cx="16" cy="16" r="8" fill="none" stroke="#777" strokeWidth="6" />
    {[0, 45, 90, 135, 180, 225, 270, 315].map(a => (
      <rect key={a} x="13" y="1" width="6" height="6" fill="#777" transform={`rotate(${a} 16 16)`} />
    ))}
  </svg>
);

function App() {
  return (
    <Page>
      <GlobalStyle />
      <AppWindow>
        <TitleBar>
          <Lights>
            <Light $color="#de8669" aria-label="Close" />
            <Light $color="#f9ad38" aria-label="Minimize" />
            <Light $color="#4bbd64" aria-label="Zoom window" />
          </Lights>
          <h1>Autodesk Fusion (Education License)</h1>
        </TitleBar>

        <Strip>
          <QuickTools>
            <ToolButton aria-label="Data panel">
              <svg width="32" height="32" viewBox="0 0 32 32">
                <path fill="#666" d="M2 2h8v8H2zM12 2h8v8h-8zM22 2h8v8h-8zM2 12h8v8H2zM12 12h8v8h-8zM22 12h8v8h-8zM2 22h8v8H2zM12 22h8v8h-8zM22 22h8v8h-8z" />
              </svg>
            </ToolButton>
            <ToolButton aria-label="File">
              <svg width="32" height="32" viewBox="0 0 32 32">
                <path fill="#666" d="M3 0h14v11h11v19l-2 2H5l-2-2zM19 0l9 9h-9z" />
              </svg>
              <Caret w={14} h={10} color="#666" />
            </ToolButton>
            <ToolButton aria-label="Save">
              <svg width="32" height="32" viewBox="0 0 32 32">
                <path fill="#666" fillRule="evenodd" d="M4 2h24l2 2v26H8l-6-5V4zM8 4v10h16V4h-3v7h-6V4zM11 21v9h10v-9zM14 24h4v6h-4z" />
              </svg>
            </ToolButton>
            <History>
              <ToolButton aria-label="Undo">
                <svg width="32" height="32" viewBox="0 0 32 32" fill="none" stroke="#666" strokeWidth="4">
                  <path d="M13 4l-9 9 9 9M5 13h8c9 0 14 5 14 15" />
                </svg>
                <Caret w={14} h={10} color="#666" />
              </ToolButton>
              <ToolButton aria-label="Redo" disabled>
                <svg width="32" height="32" viewBox="0 0 32 32" fill="none" stroke="#444" strokeWidth="4">
                  <path d="M17 4l9 9-9 9M25 13h-8C8 13 3 18 3 28" />
                </svg>
                <Caret w={14} h={10} color="#444" />
              </ToolButton>
            </History>
          </QuickTools>
          <SideTab $width="78px" aria-label="Home">
            <svg width="32" height="32" viewBox="0 0 32 32">
              <path fill="#7d7d7d" d="M16 3l6 6V4h4v9l5 6h-4v11h-7v-9h-8v9H5V19H1zM14 23h4v7h-4z" />
            </svg>
          </SideTab>
          <DocTab>
            <DocName>
              <svg width="30" height="32" viewBox="0 0 30 32" aria-hidden="true">
                <path fill="#fbb9a6" d="M15 0l14 8-14 8L1 8z" />
                <path fill="#f9ad38" d="M1 8l14 8v16L1 24z" />
                <path fill="#e28500" d="M29 8l-14 8v16l14-8z" />
              </svg>
              cadmidterm2 v27*
            </DocName>
            <button aria-label="Close document">
              <svg width="20" height="20" viewBox="0 0 20 20" stroke="#777" strokeWidth="3">
                <path d="M2 2l16 16M18 2L2 18" />
              </svg>
            </button>
          </DocTab>
          <SideTab $width="55px" aria-label="New design">
            <svg width="26" height="26" viewBox="0 0 26 26">
              <path stroke="#7d7d7d" strokeWidth="6" d="M13 1v24M1 13h24" />
            </svg>
          </SideTab>
          <Account>
            <Status $gap={34}>
              <ToolButton aria-label="Extensions">
                <svg width="32" height="32" viewBox="0 0 32 32" fill="none" stroke="#666">
                  <path strokeWidth="4" d="M23 4A14 14 0 0 0 5 24M27 8A14 14 0 0 1 9 28" />
                  <path fill="#666" stroke="none" d="M12 9l11 11c-4 4-8 4-11 1l-7 7-2-2 7-7c-2-3-2-7 2-10z" />
                  <path strokeWidth="3" d="M15 12l6-6M20 17l6-6" />
                </svg>
              </ToolButton>
              <ToolButton>
                <svg width="32" height="32" viewBox="0 0 32 32" aria-hidden="true">
                  <circle cx="16" cy="16" r="14" fill="none" stroke="#666" strokeWidth="3" />
                  <circle cx="16" cy="16" r="11" fill="#666" />
                  <path fill="none" stroke="#ddd" strokeWidth="2" d="M16 8v9h7" />
                </svg>
                1
              </ToolButton>
            </Status>
            <Status $gap={30}>
              <ToolButton aria-label="Notifications"><MdNotifications size={36} /></ToolButton>
              <ToolButton aria-label="Help"><MdHelp size={36} /></ToolButton>
              <Avatar>YY</Avatar>
            </Status>
          </Account>
        </Strip>

        <Ribbon>
          <Workspace>DESIGN <Caret /></Workspace>
          <div>
            <Tabs>
              {['SOLID', 'SURFACE', 'MESH', 'SHEET METAL', 'PLASTIC', 'UTILITIES'].map(name => (
                <Tab key={name} $active={name === 'SOLID'}>{name}</Tab>
              ))}
            </Tabs>
            <Groups>
              {groups.map(group => (
                <Group key={group.label} $width={group.width}>
                  <Commands>
                    {group.tools.map(name => (
                      <button key={name} aria-label={name}><FeatureIcon name={name} /></button>
                    ))}
                    {group.label === 'SELECT' && (
                      <SelectTool aria-label="Select">
                        <svg width="76" height="76" viewBox="0 0 76 76">
                          <path fill="none" stroke={green} strokeWidth="2" strokeDasharray="8 4" d="M7 7h54v43H7z" />
                          <path fill="#fff" d="M48 34l22 22-9 1 5 11-6 3-5-12-7 6z" />
                        </svg>
                      </SelectTool>
                    )}
                  </Commands>
                  <GroupLabel>{group.label} <Caret /></GroupLabel>
                </Group>
              ))}
            </Groups>
          </div>
        </Ribbon>

        <Viewport>
          <Model />
          <Cube />
          <NavBar>
            {navItems.map(item => (
              <NavButton key={item.name} $width={item.width} $gap={item.gap} aria-label={item.label}>
                <svg width="32" height="32" viewBox="0 0 32 32" fill="none" stroke={ink} strokeWidth="1.5">
                  {navShapes[item.name]}
                </svg>
                {item.menu && <Caret w={12} h={8} />}
              </NavButton>
            ))}
          </NavBar>
          <Hint>Thicken4</Hint>
        </Viewport>

        <Footer>
          <Playback>
            {playback.map(item => (
              <button key={item.label} aria-label={item.label}>
                <svg width="32" height="32" viewBox="0 0 32 32"><path fill="#666" d={item.d} /></svg>
              </button>
            ))}
          </Playback>
          <Timeline>
            <ScrollArea />
            <Features>
              {features.map((name, i) => (
                <Feature key={i} $selected={i === current} $faded={i > current}>
                  <button aria-label={name}><FeatureIcon name={name} size={32} /></button>
                  {i === current && (
                    <Marker width="24" height="64" viewBox="0 0 24 64" aria-hidden="true">
                      <path fill="#666" d="M0 0h24v8L14 18v46h-4V18L0 8z" />
                    </Marker>
                  )}
                </Feature>
              ))}
            </Features>
            <Track><span /><span /><span /><span /><span /></Track>
          </Timeline>
          <Settings aria-label="Timeline settings"><Gear /></Settings>
        </Footer>
      </AppWindow>
    </Page>
  );
}

export default App;
